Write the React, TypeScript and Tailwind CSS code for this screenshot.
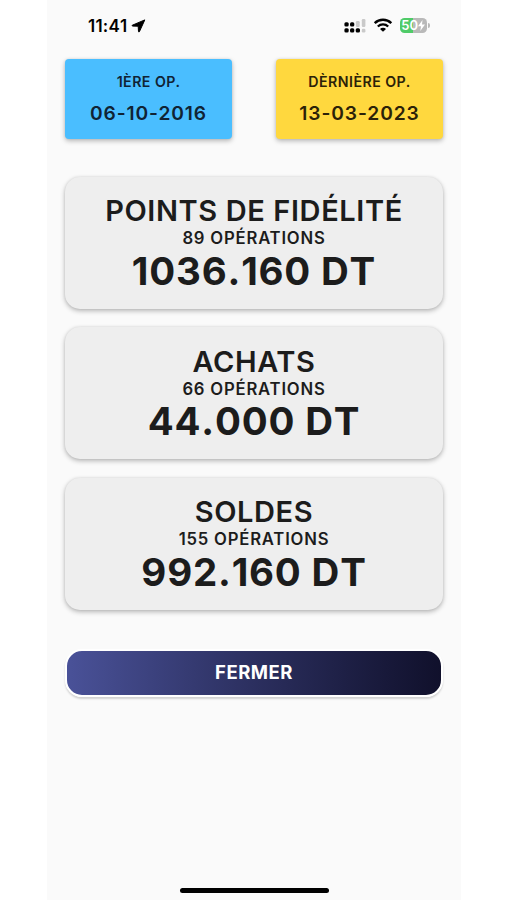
interface Summary {
  title: string;
  operations: string;
  amount: string;
}

const SUMMARIES: Summary[] = [
  { title: 'POINTS DE FIDÉLITÉ', operations: '89 OPÉRATIONS', amount: '1036.160 DT' },
  { title: 'ACHATS', operations: '66 OPÉRATIONS', amount: '44.000 DT' },
  { title: 'SOLDES', operations: '155 OPÉRATIONS', amount: '992.160 DT' },
];

function StatusBar() {
  return (
    <div className="flex h-[58.5px] items-start justify-between pl-[41px] pr-[31px] pt-[15px] text-black">
      <div className="flex items-center gap-[4px]">
        <span className="text-[17px] leading-[22px] font-semibold tracking-[0.2px] [font-kerning:none]">11:41</span>
        <svg width="15" height="14" viewBox="0 0 15 14" fill="currentColor">
          <path d="M13.8 0.9 8.4 12.7c-.2.5-.9.4-.9-.2L7.2 7.2 1.6 7.1c-.6 0-.7-.7-.2-.9z" stroke="currentColor" strokeLinejoin="round" />
        </svg>
      </div>
      <div className="flex h-[22px] items-center">
        <svg width="22" height="14" viewBox="0 0 22 14">
          <g fill="#000">
            <rect x="0.4" y="3.2" width="4.3" height="4.3" rx="1.5" />
            <rect x="6" y="3.2" width="4.3" height="4.3" rx="1.5" />
            <rect x="0.4" y="9.2" width="4.3" height="4.3" rx="1.5" />
            <rect x="6" y="9.2" width="4.3" height="4.3" rx="1.5" />
            <rect x="11.7" y="9.2" width="4.3" height="4.3" rx="1.5" />
          </g>
          <g fill="#c9c9c9">
            <rect x="11.9" y="2" width="3.8" height="6" rx="1.2" />
            <rect x="17.8" y="0" width="3.6" height="8" rx="1.2" />
            <rect x="17.8" y="9.7" width="3.6" height="3.8" rx="1.2" />
          </g>
        </svg>
        <svg className="ml-[7px] -mt-[2px]" width="20" height="14" viewBox="0 0 19 14" fill="none" stroke="#000">
          <path d="M1.2 5.1a12 12 0 0 1 16.6 0" strokeWidth="2.4" />
          <path d="M4.3 8.5a7.6 7.6 0 0 1 10.4 0" strokeWidth="2.3" />
          <path d="M9.5 13.8 6.5 10.9a4.2 4.2 0 0 1 6 0z" fill="#000" stroke="none" />
        </svg>
        <div className="ml-[7px] -mt-[2px] flex h-[15px] w-[27.5px] items-center justify-center rounded-[4.5px] bg-linear-to-r from-[#4fcb68] from-50% to-[#b9b9b9] to-50% text-[13px] leading-[15px] font-semibold text-white">
          <span>50</span>
          <svg width="7" height="11" viewBox="0 0 7 11" fill="#fff">
            <path d="M4.5 0 0 6.2h3L2.3 11 7 4.6H4z" />
          </svg>
        </div>
        <div className="ml-px -mt-[2px] h-[5px] w-[2px] rounded-r-full bg-[#b9b9b9]" />
      </div>
    </div>
  );
}

function SummaryCard({ title, operations, amount }: Summary) {
  return (
    <section className="flex h-[132px] flex-col items-center rounded-[15px] bg-[#eeeeee] pt-[15.5px] font-semibold whitespace-nowrap text-[#1c1c1c] shadow-[0_2px_5px_rgba(0,0,0,0.27),0_0_3px_rgba(0,0,0,0.08)]">
      <h2 className="text-[29px] leading-[37px] tracking-[0.6px]">{title}</h2>
      <p className="text-[16.7px] leading-[18.5px] tracking-[0.8px]">{operations}</p>
      <p className="text-[38.5px] leading-[47px] font-bold tracking-[0.8px] [font-kerning:none]">{amount}</p>
    </section>
  );
}

export default function App() {
  return (
    <div className="flex h-[900px] justify-center bg-white pr-[1px] font-['Inter',sans-serif]">
      <main className="ml-[2px] flex w-[414px] flex-col bg-[#fafafa]">
        <StatusBar />

        {/* First and last operation dates */}
        <div className="flex justify-between px-[18px] text-center font-semibold whitespace-nowrap">
          <div className="h-[80px] w-[167px] rounded-[4px] bg-[#4abeff] pt-[13.5px] text-[#102334] shadow-[0_2px_5px_rgba(0,0,0,0.27),0_0_3px_rgba(0,0,0,0.08)]">
            <p className="text-[14.2px] leading-[20px] tracking-[0.45px]">1ÈRE OP.</p>
            <p className="mt-[9.5px] text-[19.2px] leading-[22px] tracking-[0.9px]">06-10-2016</p>
          </div>
          <div className="h-[80px] w-[167px] rounded-[4px] bg-[#ffd83e] pt-[13.5px] text-[#2b2208] shadow-[0_2px_5px_rgba(0,0,0,0.27),0_0_3px_rgba(0,0,0,0.08)]">
            <p className="text-[14.2px] leading-[20px] tracking-[0.45px]">DÈRNIÈRE OP.</p>
            <p className="mt-[9.5px] text-[19.2px] leading-[22px] tracking-[0.9px]">13-03-2023</p>
          </div>
        </div>

        <div className="mt-[38px] flex flex-col gap-[18.5px] px-[18px]">
          {SUMMARIES.map((summary) => (
            <SummaryCard key={summary.title} {...summary} />
          ))}
        </div>

        <button className="mx-[18px] mt-[39px] h-[48px] rounded-[17px] border-2 border-white bg-linear-to-r from-[#4a5299] to-[#10102b] bg-origin-border pt-px text-[18.5px] font-bold tracking-[0.5px] text-white shadow-[0_2px_2px_rgba(0,0,0,0.16)]">
          FERMER
        </button>

        {/* Home indicator */}
        <div className="mt-auto mb-[7.5px] ml-[133px] h-[5px] w-[149px] rounded-full bg-black" />
      </main>
    </div>
  );
}
